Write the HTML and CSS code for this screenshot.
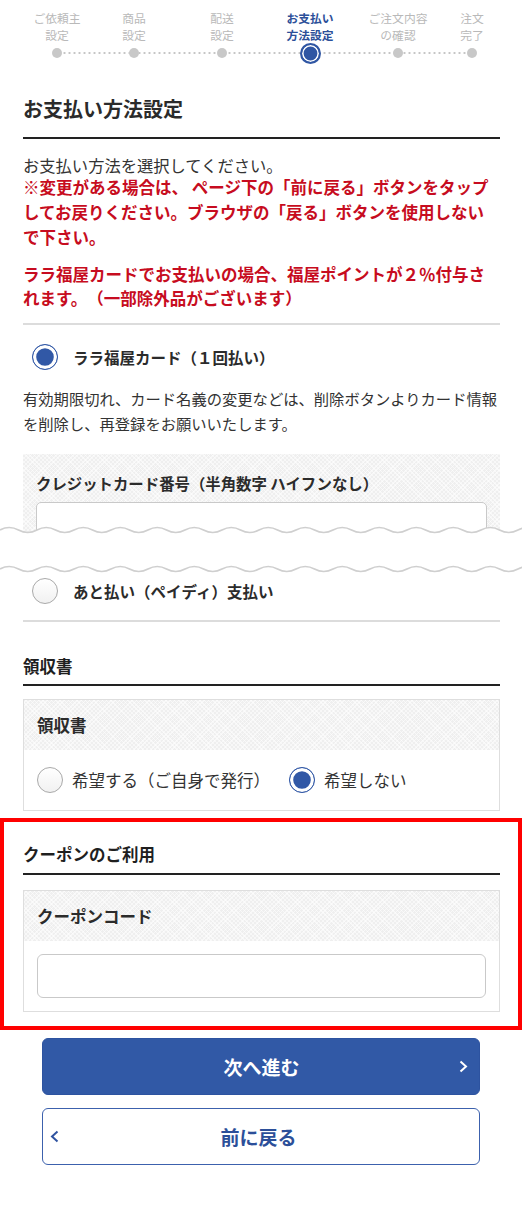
FILE: index.html
```html
<!DOCTYPE html>
<html lang="ja">
<head>
<meta charset="utf-8">
<title>お支払い方法設定</title>
<link rel="stylesheet" href="styles.css">
</head>
<body>
<ol class="steps">
  <li class="step"><span class="step-label">ご依頼主<br>設定</span><span class="step-dot"></span></li>
  <li class="step"><span class="step-label">商品<br>設定</span><span class="step-dot"></span></li>
  <li class="step"><span class="step-label">配送<br>設定</span><span class="step-dot"></span></li>
  <li class="step step--active"><span class="step-label">お支払い<br>方法設定</span><span class="step-dot"></span></li>
  <li class="step"><span class="step-label">ご注文内容<br>の確認</span><span class="step-dot"></span></li>
  <li class="step"><span class="step-label">注文<br>完了</span><span class="step-dot"></span></li>
</ol>

<main class="page">
  <h1 class="page-title">お支払い方法設定</h1>
  <p class="lead">お支払い方法を選択してください。</p>
  <p class="notice">※変更がある場合は、 ページ下の「前に戻る」ボタンをタップ<br>してお戻りください。ブラウザの「戻る」ボタンを使用しない<br>で下さい。</p>
  <p class="notice notice--points">ララ福屋カードでお支払いの場合、福屋ポイントが２％付与さ<br>れます。（一部除外品がございます）</p>

  <section class="pay-list">
    <div class="pay-option"><span class="radio radio--on"></span><span class="pay-name">ララ福屋カード（１回払い）</span></div>
    <p class="pay-desc">有効期限切れ、カード名義の変更などは、削除ボタンよりカード情報<br>を削除し、再登録をお願いいたします。</p>
    <div class="card-field">
      <div class="field-label">クレジットカード番号（半角数字 ハイフンなし）</div>
      <input class="text-input" type="text" aria-label="クレジットカード番号">
    </div>
    <div class="cut">
      <svg class="cut-svg" width="522" height="52" viewBox="0 0 522 52" aria-hidden="true">
        <path fill="#fff" d="M0 6q9.25 -5 18.5 0t18.5 0t18.5 0t18.5 0t18.5 0t18.5 0t18.5 0t18.5 0t18.5 0t18.5 0t18.5 0t18.5 0t18.5 0t18.5 0t18.5 0t18.5 0t18.5 0t18.5 0t18.5 0t18.5 0t18.5 0t18.5 0t18.5 0t18.5 0t18.5 0t18.5 0t18.5 0t18.5 0t18.5 0V52H0Z"/>
        <path fill="none" stroke="#cfcfcf" stroke-width="1.6" d="M0 6q9.25 -5 18.5 0t18.5 0t18.5 0t18.5 0t18.5 0t18.5 0t18.5 0t18.5 0t18.5 0t18.5 0t18.5 0t18.5 0t18.5 0t18.5 0t18.5 0t18.5 0t18.5 0t18.5 0t18.5 0t18.5 0t18.5 0t18.5 0t18.5 0t18.5 0t18.5 0t18.5 0t18.5 0t18.5 0t18.5 0"/>
        <path fill="none" stroke="#cfcfcf" stroke-width="1.6" d="M0 45q9.25 -5 18.5 0t18.5 0t18.5 0t18.5 0t18.5 0t18.5 0t18.5 0t18.5 0t18.5 0t18.5 0t18.5 0t18.5 0t18.5 0t18.5 0t18.5 0t18.5 0t18.5 0t18.5 0t18.5 0t18.5 0t18.5 0t18.5 0t18.5 0t18.5 0t18.5 0t18.5 0t18.5 0t18.5 0t18.5 0"/>
      </svg>
    </div>
    <div class="pay-option pay-option--second"><span class="radio"></span><span class="pay-name">あと払い（ペイディ）支払い</span></div>
  </section>

  <h2 class="sec-title sec-title--receipt">領収書</h2>
  <div class="box box--receipt">
    <div class="box-head">領収書</div>
    <div class="box-body receipt-options">
      <div class="choice"><span class="radio"></span><span>希望する（ご自身で発行）</span></div>
      <div class="choice"><span class="radio radio--on"></span><span>希望しない</span></div>
    </div>
  </div>

  <section class="highlight">
    <h2 class="sec-title">クーポンのご利用</h2>
    <div class="box box--coupon">
      <div class="box-head">クーポンコード</div>
      <div class="box-body coupon-body">
        <input class="text-input" type="text" aria-label="クーポンコード">
      </div>
    </div>
  </section>

  <div class="actions">
    <a class="btn btn--next" href="#"><span></span><span class="btn-text">次へ進む</span><svg class="chev chev--right" width="9" height="13" viewBox="0 0 9 13"><polyline points="1.5,1.5 7,6.5 1.5,11.5" fill="none" stroke="#fff" stroke-width="2"/></svg></a>
    <a class="btn btn--back" href="#"><svg class="chev chev--left" width="9" height="13" viewBox="0 0 9 13"><polyline points="7.5,1.5 2,6.5 7.5,11.5" fill="none" stroke="#2f53a0" stroke-width="2"/></svg><span class="btn-text">前に戻る</span><span></span></a>
  </div>
</main>
</body>
</html>
```

FILE: styles.css
```css
* { box-sizing: border-box; }

html, body {
  margin: 0;
  padding: 0;
  background: #fff;
}

body {
  font-family: "Noto Sans CJK JP", "Noto Sans", sans-serif;
  color: #333;
  width: 522px;
  text-spacing-trim: space-all;
}

p, h1, h2, ol { margin: 0; padding: 0; }

/* ---------- steps ---------- */
.steps {
  list-style: none;
  position: relative;
  display: grid;
  grid-template-columns: 66px 88px 88px 88px 88px 60px;
  margin-left: 24px;
  padding-top: 9px;
  width: 478px;
}
.steps::before {
  content: "";
  position: absolute;
  left: 33px;
  right: 31px;
  top: 51px;
  height: 4px;
  background-image: radial-gradient(circle at center, #c6c6c6 0.9px, transparent 1.3px);
  background-size: 5px 4px;
  background-repeat: repeat-x;
}
.step {
  display: flex;
  flex-direction: column;
  align-items: center;
}
.step-label {
  font-size: 11.8px;
  line-height: 17.2px;
  color: #b9b9b9;
  text-align: center;
  white-space: nowrap;
}
.step-dot {
  position: relative;
  z-index: 1;
  margin-top: 1.6px;
  height: 16px;
  display: flex;
  align-items: center;
  justify-content: center;
}
.step-dot::after {
  content: "";
  width: 10px;
  height: 10px;
  border-radius: 50%;
  background: #c8c8c8;
}
.step--active .step-label {
  color: #2c4f99;
  font-weight: 700;
}
.step--active .step-dot::after {
  width: 17px;
  height: 17px;
  border: 2px solid #2f56a3;
  background: #2f56a3;
  box-shadow: inset 0 0 0 1.6px #fff;
}

/* ---------- page ---------- */
.page {
  padding: 0 22px 40px 23px;
}

.page-title {
  margin-top: 34px;
  font-size: 20px;
  line-height: 28px;
  font-weight: 700;
  color: #2b2b2b;
  padding-bottom: 14px;
  border-bottom: 2px solid #222;
}

.lead {
  margin-top: 16px;
  font-size: 16.3px;
  line-height: 20px;
  white-space: nowrap;
}

.notice {
  font-size: 16.5px;
  line-height: 25px;
  font-weight: 700;
  color: #c70c20;
  white-space: nowrap;
}
.notice--points {
  margin-top: 12px;
  line-height: 24px;
}

/* ---------- payment ---------- */
.pay-list {
  margin-top: 13px;
  border-top: 2px solid #dcdcdc;
  border-bottom: 2px solid #dcdcdc;
  padding-bottom: 16px;
}
.pay-option {
  margin-top: 19px;
  display: flex;
  align-items: center;
  gap: 15px;
  padding-left: 9px;
  height: 26px;
}
.pay-option--second {
  margin-top: 2px;
}
.pay-name {
  font-size: 15.5px;
  font-weight: 700;
  color: #2b2b2b;
  line-height: 24px;
}
.pay-desc {
  margin-top: 16px;
  font-size: 15.3px;
  line-height: 25px;
  white-space: nowrap;
}

.radio {
  flex: none;
  width: 26px;
  height: 26px;
  border-radius: 50%;
  border: 1.5px solid #a9a9a9;
  background: linear-gradient(#ffffff, #f1f1f1);
}
.radio--on {
  border-color: #3158a6;
  background: #3158a6;
  box-shadow: inset 0 0 0 3.2px #fff;
}

.card-field,
.box-head {
  background-color: #efefef;
  background-image:
    repeating-linear-gradient(45deg, rgba(255,255,255,0.55) 0 1px, transparent 1px 3px),
    repeating-linear-gradient(-45deg, rgba(255,255,255,0.55) 0 1px, transparent 1px 3px);
}

.card-field {
  margin-top: 18px;
  height: 80px;
  overflow: hidden;
  padding: 17px 13px 0 13px;
}
.field-label {
  font-size: 15.4px;
  font-weight: 700;
  line-height: 24px;
  color: #2b2b2b;
  white-space: nowrap;
}
.card-field .text-input {
  margin-top: 7px;
  border-radius: 5px;
}

.text-input {
  display: block;
  width: 100%;
  height: 44px;
  border: 1px solid #c9c9c9;
  border-radius: 6px;
  background: #fff;
  font: inherit;
  padding: 0 10px;
}

.cut {
  position: relative;
  z-index: 1;
  margin: -10px -22px 0 -23px;
  height: 52px;
}
.cut-svg { display: block; }

/* ---------- sections ---------- */
.sec-title {
  font-size: 16.5px;
  line-height: 24px;
  font-weight: 700;
  color: #1f1f1f;
  padding-bottom: 7px;
  border-bottom: 2px solid #222;
}
.sec-title--receipt {
  margin-top: 32px;
  padding-bottom: 6px;
}

.box {
  border: 1px solid #dedede;
}
.box--receipt { margin-top: 13px; }
.box--coupon { margin-top: 15px; }

.box-head {
  padding: 13px 13px;
  font-size: 16.5px;
  line-height: 24px;
  font-weight: 700;
  color: #2b2b2b;
}
.box-body {
  padding: 17px 13px 17px;
  background: #fff;
}
.receipt-options {
  display: flex;
  align-items: center;
  gap: 19px;
}
.choice {
  display: flex;
  align-items: center;
  gap: 9px;
  font-size: 16.5px;
  line-height: 24px;
  color: #333;
}
.coupon-body {
  padding: 13px 13px;
}

/* ---------- highlight frame ---------- */
.highlight {
  margin: 7px -22px 0 -23px;
  border: 4px solid #ff0000;
  padding: 20px 18px 14px 19px;
}

/* ---------- buttons ---------- */
.actions {
  margin: 8px 20px 0 19px;
  display: flex;
  flex-direction: column;
  gap: 13px;
}
.btn {
  display: grid;
  grid-template-columns: 1fr auto 1fr;
  align-items: center;
  height: 57px;
  border-radius: 6px;
  text-decoration: none;
  font-size: 19px;
  font-weight: 700;
}
.btn-text { line-height: 26px; }
.btn--next {
  background: #3159a6;
  color: #fff;
  border: 1px solid #2d53a0;
  padding: 0 11px 0 12px;
}
.btn--back {
  background: #fff;
  color: #2c4f99;
  border: 1.5px solid #3c61ad;
  padding: 0 12px 0 7px;
}
.chev { display: block; }
.chev--right { justify-self: end; }
.chev--left { justify-self: start; }
```
